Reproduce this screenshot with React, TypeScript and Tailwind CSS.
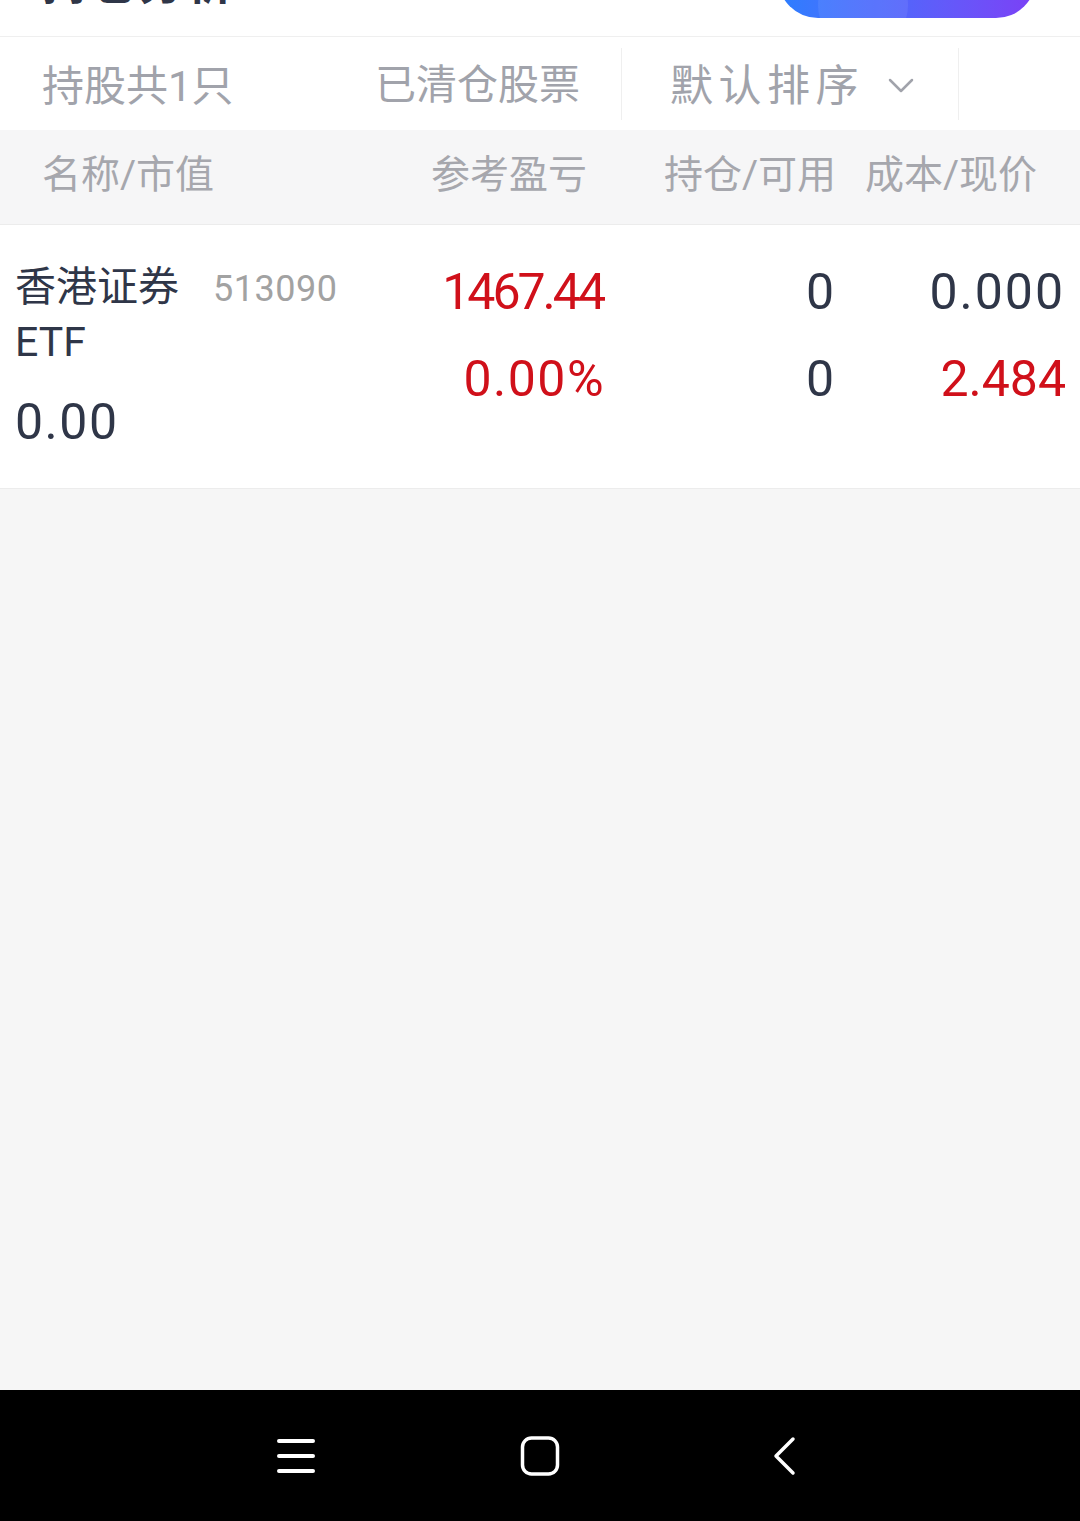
import React from "react";

const sans = "font-['Roboto','Noto_Sans_CJK_SC',sans-serif]";

function NavBar() {
  return (
    <div className="h-[131px] bg-black flex items-center justify-center gap-[204px]">
      <svg width="40" height="40" viewBox="0 0 40 40" fill="none" stroke="white" strokeWidth="4" strokeLinecap="round">
        <path d="M3 5h34M3 20h34M3 35h34" />
      </svg>
      <svg width="40" height="40" viewBox="0 0 40 40" fill="none" stroke="white" strokeWidth="3.5">
        <rect x="2.5" y="2" width="35" height="36" rx="9" />
      </svg>
      <svg width="40" height="40" viewBox="0 0 40 40" fill="none" stroke="white" strokeWidth="3.5" strokeLinecap="round" strokeLinejoin="round">
        <path d="M29 3L12 20l17 17" />
      </svg>
    </div>
  );
}

export default function App() {
  return (
    <div className={`${sans} w-[1080px] min-h-[1521px] flex flex-col bg-[#f6f6f6]`}>
      {/* page header, scrolled mostly out of view */}
      <div className="h-[37px] overflow-hidden bg-white border-b border-[#efefef] flex items-start justify-between pl-[42px] pr-[44px]">
        <div className="-mt-[41px] text-[47px] leading-[48px] font-bold tracking-[1px] text-[#2f3648]">持仓分析</div>
        <div className="-mt-[62px] relative w-[258px] h-[80px] rounded-[40px] overflow-hidden bg-gradient-to-r from-[#2a7eff] via-[#5563fb] to-[#7b3ff6]">
          <div className="absolute left-[40px] top-[22px] w-[90px] h-[90px] rounded-full bg-white/[0.07]" />
        </div>
      </div>

      {/* tabs */}
      <div className="h-[93px] pt-[5px] bg-white flex items-center text-[41px] text-[#a1a3ab]">
        <div className="w-[375px] pl-[42px] text-[42px]">持股共1只</div>
        <div className="w-[246px]">已清仓股票</div>
        <div className="w-px h-[72px] -mt-[5px] bg-[#efefef]" />
        <div className="w-[336px] pl-[48px] flex items-center">
          <span className="tracking-[5.5px] text-[43px]">默认排序</span>
          <svg className="ml-[24px]" width="26" height="16" viewBox="0 0 26 16" fill="none" stroke="#a1a3ab" strokeWidth="2.5" strokeLinecap="round" strokeLinejoin="round">
            <path d="M2 2l11 11L24 2" />
          </svg>
        </div>
        <div className="w-px h-[72px] -mt-[5px] bg-[#efefef]" />
      </div>

      {/* table header */}
      <div className="h-[95px] pb-[3px] bg-[#f6f6f7] border-b border-[#ececec] flex items-center px-[42px] text-[39px] text-[#a6a7ad]">
        <div className="w-[345px]">名称/市值</div>
        <div className="w-[200px] text-right">参考盈亏</div>
        <div className="w-[249px] text-right">持仓/可用</div>
        <div className="w-[201px] text-right">成本/现价</div>
      </div>

      {/* holding row */}
      <div className="h-[264px] bg-white border-b border-[#ececec] flex pl-[15px] pr-[14px]">
        <div className="w-[375px] pt-[35px] text-[#2f3648]">
          <div className="flex items-start">
            <div className="w-[180px] text-[41px] leading-[55px]">香港证券ETF</div>
            <div className="ml-[18px] pt-[2px] text-[36px] leading-[55px] tracking-[0.5px] text-[#a2a2a2]">513090</div>
          </div>
          <div className="mt-[24px] text-[50px] leading-[56px] tracking-[1.5px]">0.00</div>
        </div>
        <div className="w-[215px] pt-[39px] flex flex-col gap-[31px] items-end text-[50px] leading-[56px] text-[#d0101a]">
          <div className="tracking-[-3px] pr-[2px]">1467.44</div>
          <div className="tracking-[1.5px]">0.00%</div>
        </div>
        <div className="w-[229px] pt-[39px] flex flex-col gap-[31px] items-end text-[50px] leading-[56px] text-[#2f3648]">
          <div>0</div>
          <div>0</div>
        </div>
        <div className="flex-1 pt-[39px] flex flex-col gap-[31px] items-end text-[50px] leading-[56px]">
          <div className="text-[#2f3648] tracking-[2px] pr-[1px]">0.000</div>
          <div className="text-[#d0101a]">2.484</div>
        </div>
      </div>

      <div className="flex-1" />
      <NavBar />
    </div>
  );
}
